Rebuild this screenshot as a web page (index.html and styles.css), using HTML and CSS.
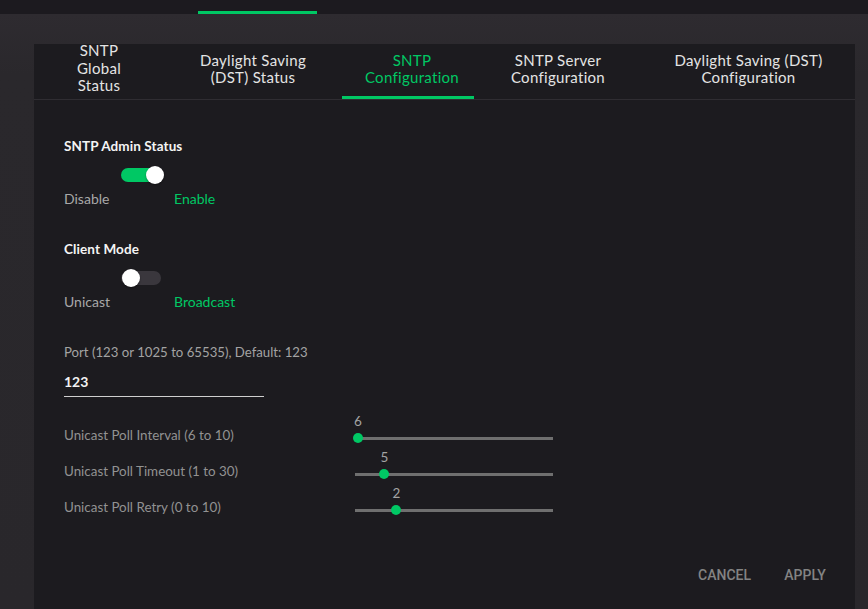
FILE: index.html
```html
<!DOCTYPE html>
<html lang="en">
<head>
<meta charset="utf-8">
<title>SNTP Configuration</title>
<link rel="stylesheet" href="styles.css">
</head>
<body>
<div class="topbar"><div class="topbar-indicator"></div></div>
<div class="page">
  <div class="card">
    <nav class="tabs">
      <div class="tab tab-1">SNTP<br>Global<br>Status</div>
      <div class="tab tab-2">Daylight Saving<br>(DST) Status</div>
      <div class="tab tab-3 active">SNTP<br>Configuration</div>
      <div class="tab tab-4">SNTP Server<br>Configuration</div>
      <div class="tab tab-5">Daylight Saving (DST)<br>Configuration</div>
    </nav>
    <div class="content">
      <div class="heading first">SNTP Admin Status</div>
      <div class="switch on"><div class="switch-track"></div><div class="switch-thumb"></div></div>
      <div class="switch-labels"><span class="off-label">Disable</span><span class="on-label">Enable</span></div>

      <div class="heading">Client Mode</div>
      <div class="switch"><div class="switch-track"></div><div class="switch-thumb"></div></div>
      <div class="switch-labels"><span class="off-label">Unicast</span><span class="on-label">Broadcast</span></div>

      <div class="field-label">Port (123 or 1025 to 65535), Default: 123</div>
      <div class="text-input">123</div>

      <div class="sliders">
        <div class="slider-row">
          <div class="slider-label">Unicast Poll Interval (6 to 10)</div>
          <div class="slider">
            <div class="slider-rail">
              <span class="slider-value" style="left:0%">6</span>
              <span class="slider-thumb" style="left:0%"></span>
            </div>
          </div>
        </div>
        <div class="slider-row">
          <div class="slider-label">Unicast Poll Timeout (1 to 30)</div>
          <div class="slider">
            <div class="slider-rail">
              <span class="slider-value" style="left:13.8%">5</span>
              <span class="slider-thumb" style="left:13.8%"></span>
            </div>
          </div>
        </div>
        <div class="slider-row">
          <div class="slider-label">Unicast Poll Retry (0 to 10)</div>
          <div class="slider">
            <div class="slider-rail">
              <span class="slider-value" style="left:20%">2</span>
              <span class="slider-thumb" style="left:20%"></span>
            </div>
          </div>
        </div>
      </div>

      <div class="actions">
        <button class="btn">CANCEL</button>
        <button class="btn">APPLY</button>
      </div>
    </div>
  </div>
</div>
</body>
</html>
```
FILE: styles.css
```css
html, body {
  margin: 0;
  padding: 0;
}
body {
  width: 868px;
  height: 609px;
  overflow: hidden;
  background: #2b282d;
  font-family: "Lato", "Open Sans", sans-serif;
  color: #e6e6e6;
}
.topbar {
  height: 14px;
  background: #1c1a1f;
  display: flex;
  align-items: flex-end;
}
.topbar-indicator {
  margin-left: 198px;
  width: 119px;
  height: 3px;
  background: #00c864;
}
.page {
  height: 595px;
  padding: 30px 13px 0 34px;
  box-sizing: border-box;
  background: linear-gradient(180deg, #2e2b30 0px, #2a282c 60px, #29272b 100%);
  display: flex;
}
.card {
  width: 821px;
  background: #1c1b1f;
  display: flex;
  flex-direction: column;
}
.tabs {
  display: flex;
  height: 55px;
  border-bottom: 1px solid #2f2d32;
}
.tab {
  display: flex;
  align-items: center;
  justify-content: center;
  text-align: center;
  font-size: 15px;
  letter-spacing: 0.3px;
  line-height: 17px;
  color: #e4e4e4;
  box-sizing: border-box;
  padding-bottom: 5px;
}
.tab-1 { width: 130px; line-height: 17.5px; padding-bottom: 6px; }
.tab-2 { width: 178px; }
.tab-3 { width: 132px; padding-left: 8px; }
.tab-4 { width: 168px; }
.tab-5 { width: 213px; }
.tab.active {
  color: #00c864;
  box-shadow: inset 0 -3px 0 #00c864;
}
.content {
  padding: 0 30px;
  display: flex;
  flex-direction: column;
  align-items: flex-start;
}
.heading {
  margin-top: 34px;
  font-size: 13.5px;
  line-height: 16px;
  font-weight: 700;
  color: #f4f4f4;
  letter-spacing: 0.1px;
}
.heading.first { margin-top: 38px; }
.switch {
  position: relative;
  margin-top: 12px;
  margin-left: 57px;
  width: 43px;
  height: 18px;
}
.switch-track {
  position: absolute;
  left: 0;
  top: 2px;
  width: 40px;
  height: 14px;
  border-radius: 7px;
  background: #3a373d;
}
.switch.on .switch-track { background: #00c864; }
.switch-thumb {
  position: absolute;
  top: 0;
  left: 1px;
  width: 18px;
  height: 18px;
  border-radius: 50%;
  background: #ffffff;
  box-shadow: 0 1px 2px rgba(0,0,0,0.4);
}
.switch.on .switch-thumb { left: 25px; }
.switch-labels {
  margin-top: 7px;
  display: flex;
  font-size: 14px;
  line-height: 16px;
}
.off-label { width: 110px; color: #a8a8a8; }
.on-label { color: #00c864; }
.field-label {
  margin-top: 34px;
  font-size: 13.2px;
  line-height: 16px;
  color: #a3a3a3;
}
.text-input {
  margin-top: 10px;
  width: 200px;
  font-size: 14px;
  line-height: 24px;
  font-weight: 700;
  color: #f2f2f2;
  padding-bottom: 2px;
  border-bottom: 1px solid #cfcfcf;
}
.sliders {
  margin-top: 15px;
  display: flex;
  flex-direction: column;
}
.slider-row {
  display: flex;
  height: 36px;
}
.slider-label {
  width: 291px;
  align-self: flex-end;
  margin-bottom: 5px;
  font-size: 13.4px;
  line-height: 16px;
  color: #929292;
}
.slider {
  width: 198px;
  align-self: flex-end;
  height: 20px;
  display: flex;
  align-items: center;
  background: linear-gradient(#6f6f6f, #6f6f6f) center / 100% 3px no-repeat;
  border-radius: 2px;
}
.slider-rail {
  position: relative;
  flex: 1;
  margin: 0 3px;
  height: 20px;
}
.slider-thumb {
  position: absolute;
  top: 5px;
  width: 10px;
  height: 10px;
  margin-left: -5px;
  border-radius: 50%;
  background: #00c864;
}
.slider-value {
  position: absolute;
  top: -15px;
  width: 20px;
  margin-left: -10px;
  text-align: center;
  font-size: 13.5px;
  line-height: 16px;
  color: #a3a3a3;
}
.actions {
  align-self: stretch;
  margin-top: 37px;
  margin-right: -12px;
  display: flex;
  justify-content: flex-end;
  gap: 14px;
}
.btn {
  min-width: 64px;
  height: 36px;
  padding: 6px 8px;
  background: transparent;
  border: none;
  font-family: "Roboto", "Liberation Sans", sans-serif;
  font-size: 14px;
  font-weight: 500;
  color: #838383;
  cursor: pointer;
}
```
